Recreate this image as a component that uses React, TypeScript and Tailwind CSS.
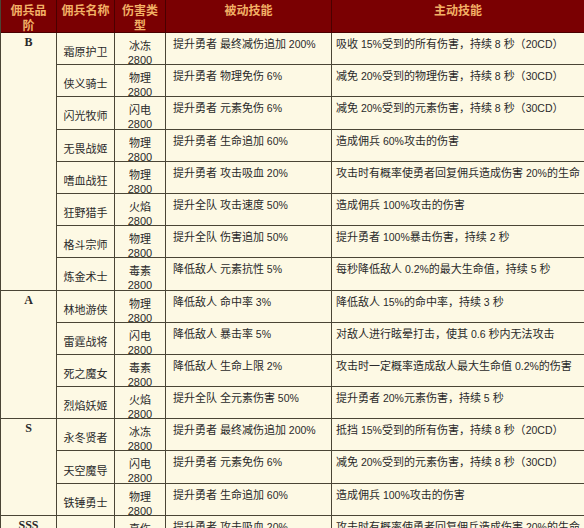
import React from "react";

type Row = { name: string; type: string; passive: string; active: string };

const groups: { tier: string; rows: Row[]; span: string }[] = [
  {
    tier: "B",
    span: "row-span-8",
    rows: [
      { name: "霜原护卫", type: "冰冻", passive: "提升勇者 最终减伤追加 200%", active: "吸收 15%受到的所有伤害，持续 8 秒（20CD）" },
      { name: "侠义骑士", type: "物理", passive: "提升勇者 物理免伤 6%", active: "减免 20%受到的物理伤害，持续 8 秒（30CD）" },
      { name: "闪光牧师", type: "闪电", passive: "提升勇者 元素免伤 6%", active: "减免 20%受到的元素伤害，持续 8 秒（30CD）" },
      { name: "无畏战姬", type: "物理", passive: "提升勇者 生命追加 60%", active: "造成佣兵 60%攻击的伤害" },
      { name: "嗜血战狂", type: "物理", passive: "提升勇者 攻击吸血 20%", active: "攻击时有概率使勇者回复佣兵造成伤害 20%的生命" },
      { name: "狂野猎手", type: "火焰", passive: "提升全队 攻击速度 50%", active: "造成佣兵 100%攻击的伤害" },
      { name: "格斗宗师", type: "物理", passive: "提升全队 伤害追加 50%", active: "提升勇者 100%暴击伤害，持续 2 秒" },
      { name: "炼金术士", type: "毒素", passive: "降低敌人 元素抗性 5%", active: "每秒降低敌人 0.2%的最大生命值，持续 5 秒" },
    ],
  },
  {
    tier: "A",
    span: "row-span-4",
    rows: [
      { name: "林地游侠", type: "物理", passive: "降低敌人 命中率 3%", active: "降低敌人 15%的命中率，持续 3 秒" },
      { name: "雷霆战将", type: "闪电", passive: "降低敌人 暴击率 5%", active: "对敌人进行眩晕打击，使其 0.6 秒内无法攻击" },
      { name: "死之魔女", type: "毒素", passive: "降低敌人 生命上限 2%", active: "攻击时一定概率造成敌人最大生命值 0.2%的伤害" },
      { name: "烈焰妖姬", type: "火焰", passive: "提升全队 全元素伤害 50%", active: "提升勇者 20%元素伤害，持续 5 秒" },
    ],
  },
  {
    tier: "S",
    span: "row-span-3",
    rows: [
      { name: "永冬贤者", type: "冰冻", passive: "提升勇者 最终减伤追加 200%", active: "抵挡 15%受到的所有伤害，持续 8 秒（20CD）" },
      { name: "天空魔导", type: "闪电", passive: "提升勇者 元素免伤 6%", active: "减免 20%受到的元素伤害，持续 8 秒（30CD）" },
      { name: "铁锤勇士", type: "物理", passive: "提升勇者 生命追加 60%", active: "造成佣兵 100%攻击的伤害" },
    ],
  },
  {
    tier: "SSS",
    span: "row-span-1",
    rows: [
      { name: "铁血战神", type: "真伤", passive: "提升勇者 攻击吸血 20%", active: "攻击时有概率使勇者回复佣兵造成伤害 20%的生命" },
    ],
  },
];

function T({ s }: { s: string }) {
  const parts = s.split(/([\x20-\x7E]+)/);
  return (
    <>
      {parts.map((p, i) =>
        /^[\x20-\x7E]+$/.test(p) ? (
          <span key={i} className="text-[10.5px] font-['Liberation_Sans','DejaVu_Sans',sans-serif] whitespace-pre">
            {p}
          </span>
        ) : (
          <React.Fragment key={i}>{p}</React.Fragment>
        )
      )}
    </>
  );
}

const cell = "border-r border-b border-[#4a4535] whitespace-nowrap";
const head =
  "border-r border-b border-[#4a0000] bg-[#7a0002] text-[#f2b066] font-bold text-[12px] leading-[15px] pt-[2px] text-center";

export default function App() {
  return (
    <div className="w-[584px] h-[528px] overflow-hidden bg-[#fdf9e4] font-['Noto_Sans_CJK_SC',sans-serif] text-[#2a2a2a]">
      <div className="grid grid-cols-[56px_58px_51px_166px_253px] grid-rows-[33px] auto-rows-[32.2px] border-l border-[#4a4535] text-[11px]">
        <div className={head}>
          佣兵品
          <br />阶
        </div>
        <div className={head}>佣兵名称</div>
        <div className={head}>
          伤害类
          <br />型
        </div>
        <div className={head}>被动技能</div>
        <div className={head}>主动技能</div>
        {groups.map((g) => (
          <React.Fragment key={g.tier}>
            <div
              className={`${cell} ${g.span} col-start-1 text-center pt-[2px] leading-[15px] font-bold text-[12px] font-['Liberation_Serif','DejaVu_Serif',serif]`}
            >
              {g.tier}
            </div>
            {g.rows.map((r) => (
              <React.Fragment key={r.name}>
                <div className={`${cell} col-start-2 flex items-center justify-center pt-[6px] leading-[15px]`}>
                  {r.name}
                </div>
                <div className={`${cell} col-start-3 text-center leading-[14px] pt-[5px]`}>
                  {r.type}
                  <br />
                  <span className="text-[11px] font-['Liberation_Sans',sans-serif]">2800</span>
                </div>
                <div className={`${cell} col-start-4 pl-[7px] pt-[3px] leading-[15px]`}>
                  <T s={r.passive} />
                </div>
                <div className={`${cell} col-start-5 pl-[4px] pt-[3px] leading-[15px] overflow-hidden`}>
                  <T s={r.active} />
                </div>
              </React.Fragment>
            ))}
          </React.Fragment>
        ))}
      </div>
    </div>
  );
}
